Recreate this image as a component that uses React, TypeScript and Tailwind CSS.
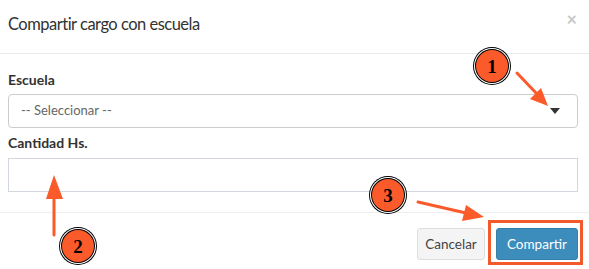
import React from 'react';

function Badge({ n }: { n: string }) {
  return (
    <div className="w-[38px] h-[38px] rounded-full bg-black p-[1px]">
      <div className="w-full h-full rounded-full bg-white p-[1px]">
        <div className="w-full h-full rounded-full bg-black p-[1px]">
          <div className="w-full h-full rounded-full bg-[#fb5a2a] flex items-center justify-center">
            <span className="font-['Liberation_Serif',serif] font-bold text-[19px] leading-none text-black">{n}</span>
          </div>
        </div>
      </div>
    </div>
  );
}

export default function App() {
  return (
    <div className="relative w-[589px] h-[269px] bg-white overflow-hidden font-['Lato',sans-serif] text-[#333]">
      {/* Header */}
      <div className="h-[54px] border-b border-[#e9e9e9] pl-[8px] pr-[11px] flex items-start justify-between">
        <h4 className="mt-[12px] text-[16.5px] leading-[24px] tracking-[-0.5px] font-normal">Compartir cargo con escuela</h4>
        <span className="mt-[10px] mr-[1px] text-[18px] leading-none text-[#c6c6c6] font-bold">×</span>
      </div>

      {/* Body */}
      <div className="h-[159px] border-b border-[#eeeeee] pl-[8px] pr-[11px] pt-[17px]">
        <label className="block text-[14px] leading-[18px] font-bold">Escuela</label>
        <div className="mt-[5px] h-[34px] rounded-[4px] border border-[#cccccc] flex items-center justify-between pl-[12px] pr-[17px]">
          <span className="text-[13px] text-[#666]">-- Seleccionar --</span>
          <span className="w-0 h-0 border-l-[5px] border-r-[5px] border-t-[6px] border-l-transparent border-r-transparent border-t-[#333]" />
        </div>
        <label className="block mt-[6px] text-[14px] leading-[18px] font-bold">Cantidad Hs.</label>
        <div className="mt-[6px] h-[34px] border border-[#d2d6de]" />
      </div>

      {/* Footer */}
      <div className="pl-[8px] pr-[11px] pt-[15px] flex justify-end gap-[11px]">
        <button className="h-[32px] w-[68px] rounded-[3px] bg-[#f4f4f4] border border-[#dddddd] text-[13.5px] text-[#444]">Cancelar</button>
        <button className="h-[32px] w-[82px] rounded-[3px] bg-[#3c8dbc] border border-[#367fa9] text-[13.5px] text-white">Compartir</button>
      </div>

      {/* Annotations */}
      <div className="absolute left-[488px] top-[220px] w-[95px] h-[45px] border-[3px] border-[#f25a2c]" />
      <div className="absolute left-[473px] top-[47px]"><Badge n="1" /></div>
      <div className="absolute left-[59px] top-[227px]"><Badge n="2" /></div>
      <div className="absolute left-[369px] top-[176px]"><Badge n="3" /></div>
      <svg className="absolute left-0 top-0" width="589" height="269" viewBox="0 0 589 269">
        <g stroke="#fb5a2a" strokeWidth="3" strokeLinecap="round" fill="#fb5a2a">
          <line x1="517" y1="73" x2="537" y2="94" />
          <line x1="54" y1="235" x2="54" y2="196" />
          <line x1="418" y1="202" x2="466" y2="213" />
        </g>
        <g fill="#fb5a2a">
          <polygon points="548,106 530,99 541,88" />
          <polygon points="54,175 46,199 63,199" />
          <polygon points="484,217 462,221 466,205" />
        </g>
      </svg>
    </div>
  );
}
